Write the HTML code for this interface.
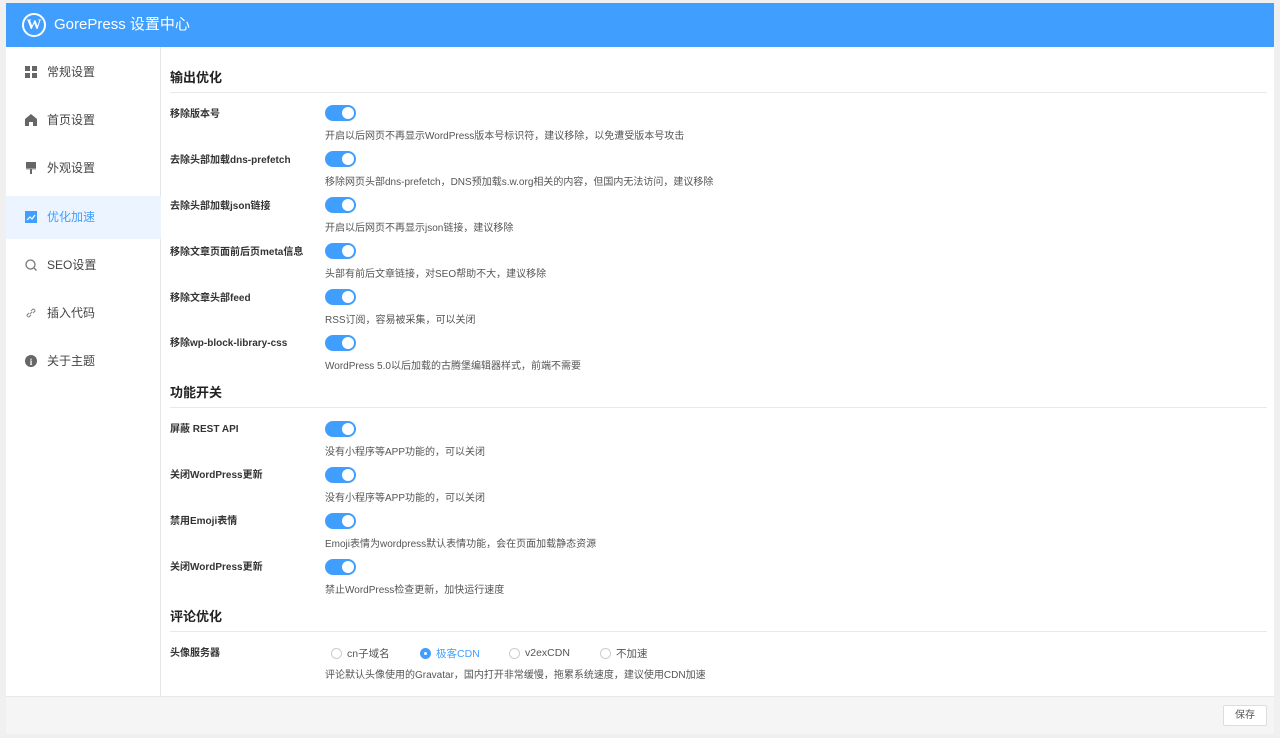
<!DOCTYPE html>
<html><head><meta charset="utf-8"><style>
*{margin:0;padding:0;box-sizing:border-box}
body{width:1280px;height:738px;background:#f0f0f1;font-family:"Liberation Sans","Noto Sans CJK SC",sans-serif;position:relative;overflow:hidden;color:#333}
.card{position:absolute;left:6px;top:3px;width:1268px;height:731px;background:#fff}
.hd{position:absolute;left:0;top:0;width:1268px;height:44px;background:#409eff;color:#fff;font-size:15px;line-height:44px;padding-left:48px}
.logo{position:absolute;left:16px;top:10px;width:24px;height:24px;border-radius:50%;border:2px solid #fff;color:#fff;font:bold 15px/20px "Liberation Serif",serif;text-align:center}
.side{position:absolute;left:0;top:44px;width:155px;height:649px;border-right:1px solid #e6e6e6}
.it{position:absolute;left:0;width:155px;height:43px;line-height:43px;font-size:12px;color:#444;padding-left:41px}
.it.act{background:#ecf5ff;color:#409eff}
.ic{position:absolute;left:19px;top:15px;width:12px;height:12px}
.main{position:absolute;left:164px;top:44px;width:1097px}
.sec{position:absolute;left:0;width:1097px;font-size:13px;font-weight:bold;color:#222;border-bottom:1px solid #e8e8e8;height:23px;line-height:16px}
.lb{position:absolute;left:0;font-size:10px;font-weight:bold;color:#333;line-height:12px}
.tg{position:absolute;left:155px;width:31px;height:16px;border-radius:8px;background:#409eff}
.tg:after{content:"";position:absolute;right:2px;top:2px;width:12px;height:12px;border-radius:50%;background:#fff}
.ds{position:absolute;left:155px;font-size:10px;color:#555;line-height:12px}
.ft{position:absolute;left:0;top:693px;width:1268px;height:38px;background:#f5f5f6;border-top:1px solid #e8e8e8}
.btn{position:absolute;right:7px;top:8px;width:44px;height:21px;border:1px solid #ddd;background:#fff;border-radius:2px;font-size:10px;line-height:19px;text-align:center;color:#555}
.rd{position:absolute;font-size:10.5px;color:#555;display:flex;align-items:center;height:14px}
.rd i{display:block;width:11px;height:11px;border:1px solid #ccc;border-radius:50%;margin-right:5px}
</style></head><body>
<div class="card">
<div class="hd"><div class="logo">W</div>GorePress 设置中心</div>
<div class="side">
<div class="it" style="top:4px"><svg class="ic" viewBox="0 0 12 12" fill="#666"><rect x="0" y="0" width="5" height="5"/><rect x="7" y="0" width="5" height="5"/><rect x="0" y="7" width="5" height="5"/><rect x="7" y="7" width="5" height="5"/></svg>常规设置</div>
<div class="it" style="top:52px"><svg class="ic" viewBox="0 0 12 12" fill="#666"><path d="M6 0L0 5v7h4V8h4v4h4V5z"/></svg>首页设置</div>
<div class="it" style="top:100px"><svg class="ic" viewBox="0 0 12 12" fill="#666"><rect x="1" y="0" width="10" height="6"/><rect x="1" y="6" width="10" height="1.5" fill="#999"/><rect x="5" y="7" width="2" height="5"/></svg>外观设置</div>
<div class="it act" style="top:149px"><svg class="ic" viewBox="0 0 12 12"><rect width="12" height="12" fill="#409eff"/><path d="M2 9l3-3 2 2 3-4" stroke="#fff" fill="none" stroke-width="1.2"/></svg>优化加速</div>
<div class="it" style="top:197px"><svg class="ic" viewBox="0 0 12 12" fill="none" stroke="#777" stroke-width="1.3"><circle cx="5.5" cy="5.5" r="4.5"/><path d="M9 9l2.5 2.5"/></svg>SEO设置</div>
<div class="it" style="top:245px"><svg class="ic" viewBox="0 0 12 12" fill="none" stroke="#888" stroke-width="1.1"><path d="M5 7l2-2M4 6L2 8a2 2 0 0 0 2 2l2-2M8 6l2-2a2 2 0 0 0-2-2L6 4"/></svg>插入代码</div>
<div class="it" style="top:293px"><svg class="ic" viewBox="0 0 12 12"><circle cx="6" cy="6" r="6" fill="#666"/><text x="6" y="10" font-size="9" font-weight="bold" fill="#fff" text-anchor="middle" font-family="Liberation Serif">i</text></svg>关于主题</div>
</div>
<div class="main">
<div class="sec" style="top:23px">输出优化</div>
<div class="lb" style="top:62px">移除版本号</div><div class="tg" style="top:58px"></div><div class="ds" style="top:84px">开启以后网页不再显示WordPress版本号标识符，建议移除，以免遭受版本号攻击</div>
<div class="lb" style="top:108px">去除头部加载dns-prefetch</div><div class="tg" style="top:104px"></div><div class="ds" style="top:130px">移除网页头部dns-prefetch，DNS预加载s.w.org相关的内容，但国内无法访问，建议移除</div>
<div class="lb" style="top:154px">去除头部加载json链接</div><div class="tg" style="top:150px"></div><div class="ds" style="top:176px">开启以后网页不再显示json链接，建议移除</div>
<div class="lb" style="top:200px">移除文章页面前后页meta信息</div><div class="tg" style="top:196px"></div><div class="ds" style="top:222px">头部有前后文章链接，对SEO帮助不大，建议移除</div>
<div class="lb" style="top:246px">移除文章头部feed</div><div class="tg" style="top:242px"></div><div class="ds" style="top:268px">RSS订阅，容易被采集，可以关闭</div>
<div class="lb" style="top:291px">移除wp-block-library-css</div><div class="tg" style="top:288px"></div><div class="ds" style="top:314px">WordPress 5.0以后加载的古腾堡编辑器样式，前端不需要</div>
<div class="sec" style="top:338px">功能开关</div>
<div class="lb" style="top:377px">屏蔽 REST API</div><div class="tg" style="top:374px"></div><div class="ds" style="top:400px">没有小程序等APP功能的，可以关闭</div>
<div class="lb" style="top:423px">关闭WordPress更新</div><div class="tg" style="top:420px"></div><div class="ds" style="top:446px">没有小程序等APP功能的，可以关闭</div>
<div class="lb" style="top:469px">禁用Emoji表情</div><div class="tg" style="top:466px"></div><div class="ds" style="top:492px">Emoji表情为wordpress默认表情功能，会在页面加载静态资源</div>
<div class="lb" style="top:515px">关闭WordPress更新</div><div class="tg" style="top:512px"></div><div class="ds" style="top:538px">禁止WordPress检查更新，加快运行速度</div>
<div class="sec" style="top:562px">评论优化</div>
<div class="lb" style="top:601px">头像服务器</div>
<div class="rd" style="left:161px;top:599px"><i></i>cn子域名</div>
<div class="rd" style="left:250px;top:599px;color:#409eff"><i style="border:4px solid #409eff"></i>极客CDN</div>
<div class="rd" style="left:339px;top:599px"><i></i>v2exCDN</div>
<div class="rd" style="left:430px;top:599px"><i></i>不加速</div>
<div class="ds" style="top:623px">评论默认头像使用的Gravatar，国内打开非常缓慢，拖累系统速度，建议使用CDN加速</div>
</div>
<div class="ft"><div class="btn">保存</div></div>
</div>
</body></html>
